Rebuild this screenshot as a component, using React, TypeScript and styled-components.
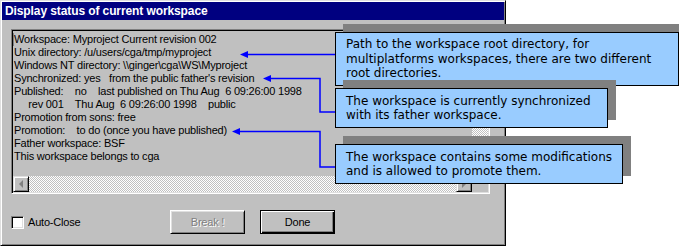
import styled, { createGlobalStyle } from 'styled-components';

const GlobalStyle = createGlobalStyle`
  html, body {
    margin: 0;
    padding: 0;
    background: #ffffff;
  }
`;

const Page = styled.div`
  position: relative;
  width: 679px;
  height: 246px;
  display: flex;
  overflow: hidden;
  background: #ffffff;
`;

const Dialog = styled.div`
  box-sizing: border-box;
  width: 506px;
  height: 246px;
  display: flex;
  flex-direction: column;
  padding: 1px;
  background: #c0c0c0;
  border-top: 1px solid #dfdfdf;
  border-left: 1px solid #dfdfdf;
  border-right: 1px solid #000000;
  border-bottom: 1px solid #000000;
  box-shadow: inset 1px 1px #ffffff, inset -1px -1px #808080;
`;

const TitleBar = styled.div`
  height: 18px;
  display: flex;
  align-items: center;
  padding-left: 3px;
  background: #000080;
  color: #ffffff;
  font-family: 'Liberation Sans', Arial, sans-serif;
  font-weight: 700;
  font-size: 12px;
  letter-spacing: -0.1px;
  white-space: nowrap;
`;

const Body = styled.div`
  display: flex;
  flex-direction: column;
  padding: 9px 14px 0 9px;
`;

const SunkenBox = styled.div`
  box-sizing: border-box;
  width: 479px;
  height: 165px;
  display: grid;
  grid-template-columns: 1fr 16px;
  grid-template-rows: 1fr 16px;
  border-top: 1px solid #808080;
  border-left: 1px solid #808080;
  border-right: 1px solid #ffffff;
  border-bottom: 1px solid #ffffff;
  box-shadow: inset 1px 1px #000000, inset -1px -1px #dfdfdf;
  padding: 1px;
`;

const StatusText = styled.div`
  padding: 2px 0 0 1px;
  font-family: 'Liberation Sans', Arial, sans-serif;
  font-size: 11px;
  letter-spacing: -0.2px;
  line-height: 13px;
  color: #000000;
  white-space: pre;
  overflow: hidden;
`;

const Caret = styled.span`
  display: inline-block;
  width: 1px;
  height: 13px;
  margin-left: -1px;
  vertical-align: top;
  background: #808080;
`;

const Track = styled.div<{ $vertical?: boolean }>`
  display: flex;
  flex-direction: ${(p) => (p.$vertical ? 'column' : 'row')};
  justify-content: space-between;
  background: repeating-conic-gradient(#c0c0c0 0 25%, #ffffff 0 50%) 0 0 / 2px 2px;
`;

const ScrollButton = styled.div`
  box-sizing: border-box;
  width: 16px;
  height: 16px;
  display: flex;
  align-items: center;
  justify-content: center;
  background: #c0c0c0;
  border-top: 1px solid #dfdfdf;
  border-left: 1px solid #dfdfdf;
  border-right: 1px solid #000000;
  border-bottom: 1px solid #000000;
  box-shadow: inset 1px 1px #ffffff, inset -1px -1px #808080;
`;

const Arrow = styled.span<{ $dir: 'left' | 'right' | 'up' | 'down' }>`
  width: 0;
  height: 0;
  border: 4px solid transparent;
  ${(p) =>
    p.$dir === 'left'
      ? 'border-right-color: #808080; border-left-width: 0; margin-left: -1px;'
      : p.$dir === 'right'
      ? 'border-left-color: #808080; border-right-width: 0;'
      : p.$dir === 'up'
      ? 'border-bottom-color: #808080; border-top-width: 0;'
      : 'border-top-color: #808080; border-bottom-width: 0;'}
`;

const Corner = styled.div`
  background: #c0c0c0;
`;

const Footer = styled.div`
  display: flex;
  align-items: center;
  height: 24px;
  margin-top: 16px;
`;

const CheckLabel = styled.label`
  flex: 0 0 159px;
  display: flex;
  align-items: center;
  gap: 4px;
  font-family: 'Liberation Sans', Arial, sans-serif;
  font-size: 11px;
  letter-spacing: -0.2px;
  color: #000000;
`;

const CheckBox = styled.span`
  box-sizing: border-box;
  width: 13px;
  height: 13px;
  background: #ffffff;
  border-top: 1px solid #808080;
  border-left: 1px solid #808080;
  border-right: 1px solid #ffffff;
  border-bottom: 1px solid #ffffff;
  box-shadow: inset 1px 1px #000000, inset -1px -1px #dfdfdf;
`;

const Buttons = styled.div`
  display: flex;
  gap: 15px;
`;

const PushButton = styled.button<{ $default?: boolean }>`
  box-sizing: border-box;
  width: 75px;
  height: 24px;
  padding: 0;
  background: #c0c0c0;
  font-family: 'Liberation Sans', Arial, sans-serif;
  font-size: 11px;
  letter-spacing: -0.2px;
  color: #000000;
  border-top: 1px solid ${(p) => (p.$default ? '#000000' : '#ffffff')};
  border-left: 1px solid ${(p) => (p.$default ? '#000000' : '#ffffff')};
  border-right: 1px solid #000000;
  border-bottom: 1px solid #000000;
  box-shadow: ${(p) =>
    p.$default
      ? 'inset 1px 1px #ffffff, inset -1px -1px #000000, inset -2px -2px #808080'
      : 'inset 1px 1px #dfdfdf, inset -1px -1px #808080'};

  &:disabled {
    color: #808080;
    text-shadow: 1px 1px #ffffff;
  }
`;

const Filler = styled.div`
  flex: 1;
  background: #ffffff;
`;

const Callout = styled.div<{ $top: number; $width: number; $height: number }>`
  position: absolute;
  left: 335px;
  top: ${(p) => p.$top}px;
  box-sizing: border-box;
  width: ${(p) => p.$width}px;
  height: ${(p) => p.$height}px;
  display: flex;
  flex-direction: column;
  justify-content: center;
  padding: 0 10px;
  background: #99ccff;
  border: 1px solid #000000;
  box-shadow: 8px -8px 0 #808080;
  font-family: 'DejaVu Sans', Verdana, sans-serif;
  font-size: 12px;
  line-height: 14.5px;
  color: #000000;
  white-space: nowrap;
`;

const Leaders = styled.svg`
  position: absolute;
  left: 0;
  top: 0;
  pointer-events: none;
`;

const BLUE = '#0000ff';

function Leader({ points, tipX, tipY }: { points: string; tipX: number; tipY: number }) {
  return (
    <g>
      <polyline points={points} fill="none" stroke={BLUE} strokeWidth={1.5} />
      <polygon
        points={`${tipX},${tipY} ${tipX + 8},${tipY - 3.5} ${tipX + 8},${tipY + 3.5}`}
        fill={BLUE}
      />
    </g>
  );
}

const lines = [
  'Workspace: Myproject Current revision 002',
  'Unix directory: /u/users/cga/tmp/myproject',
  'Windows NT directory: \\\\ginger\\cga\\WS\\Myproject',
  "Synchronized: yes   from the public father's revision",
  'Published:    no    last published on Thu Aug  6 09:26:00 1998',
  '     rev 001    Thu Aug  6 09:26:00 1998    public',
  'Promotion from sons: free',
  'Promotion:    to do (once you have published)',
  'Father workspace: BSF',
  'This workspace belongs to cga',
];

export default function App() {
  return (
    <>
      <GlobalStyle />
      <Page>
        <Dialog>
          <TitleBar>Display status of current workspace</TitleBar>
          <Body>
            <SunkenBox>
              <StatusText>
                {lines.map((line, i) => (
                  <div key={i}>
                    {i === 0 && <Caret />}
                    {line}
                  </div>
                ))}
              </StatusText>
              <Track $vertical>
                <ScrollButton>
                  <Arrow $dir="up" />
                </ScrollButton>
                <ScrollButton>
                  <Arrow $dir="down" />
                </ScrollButton>
              </Track>
              <Track>
                <ScrollButton>
                  <Arrow $dir="left" />
                </ScrollButton>
                <ScrollButton>
                  <Arrow $dir="right" />
                </ScrollButton>
              </Track>
              <Corner />
            </SunkenBox>
            <Footer>
              <CheckLabel>
                <CheckBox />
                Auto-Close
              </CheckLabel>
              <Buttons>
                <PushButton disabled>Break !</PushButton>
                <PushButton $default>Done</PushButton>
              </Buttons>
            </Footer>
          </Body>
        </Dialog>
        <Filler />

        <Leaders width={679} height={246}>
          <Leader points="248,54.5 335,54.5" tipX={240} tipY={54.5} />
          <Leader points="271,78.5 320,78.5 320,112 335,112" tipX={263} tipY={78.5} />
          <Leader points="240,131.5 320,131.5 320,167 335,167" tipX={232} tipY={131.5} />
        </Leaders>

        <Callout $top={32} $width={344} $height={54}>
          <div>Path to the workspace root directory, for</div>
          <div>multiplatforms workspaces, there are two different</div>
          <div>root directories.</div>
        </Callout>
        <Callout $top={88} $width={273} $height={40}>
          <div>The workspace is currently synchronized</div>
          <div>with its father workspace.</div>
        </Callout>
        <Callout $top={144} $width={288} $height={40}>
          <div>The workspace contains some modifications</div>
          <div>and is allowed to promote them.</div>
        </Callout>
      </Page>
    </>
  );
}
